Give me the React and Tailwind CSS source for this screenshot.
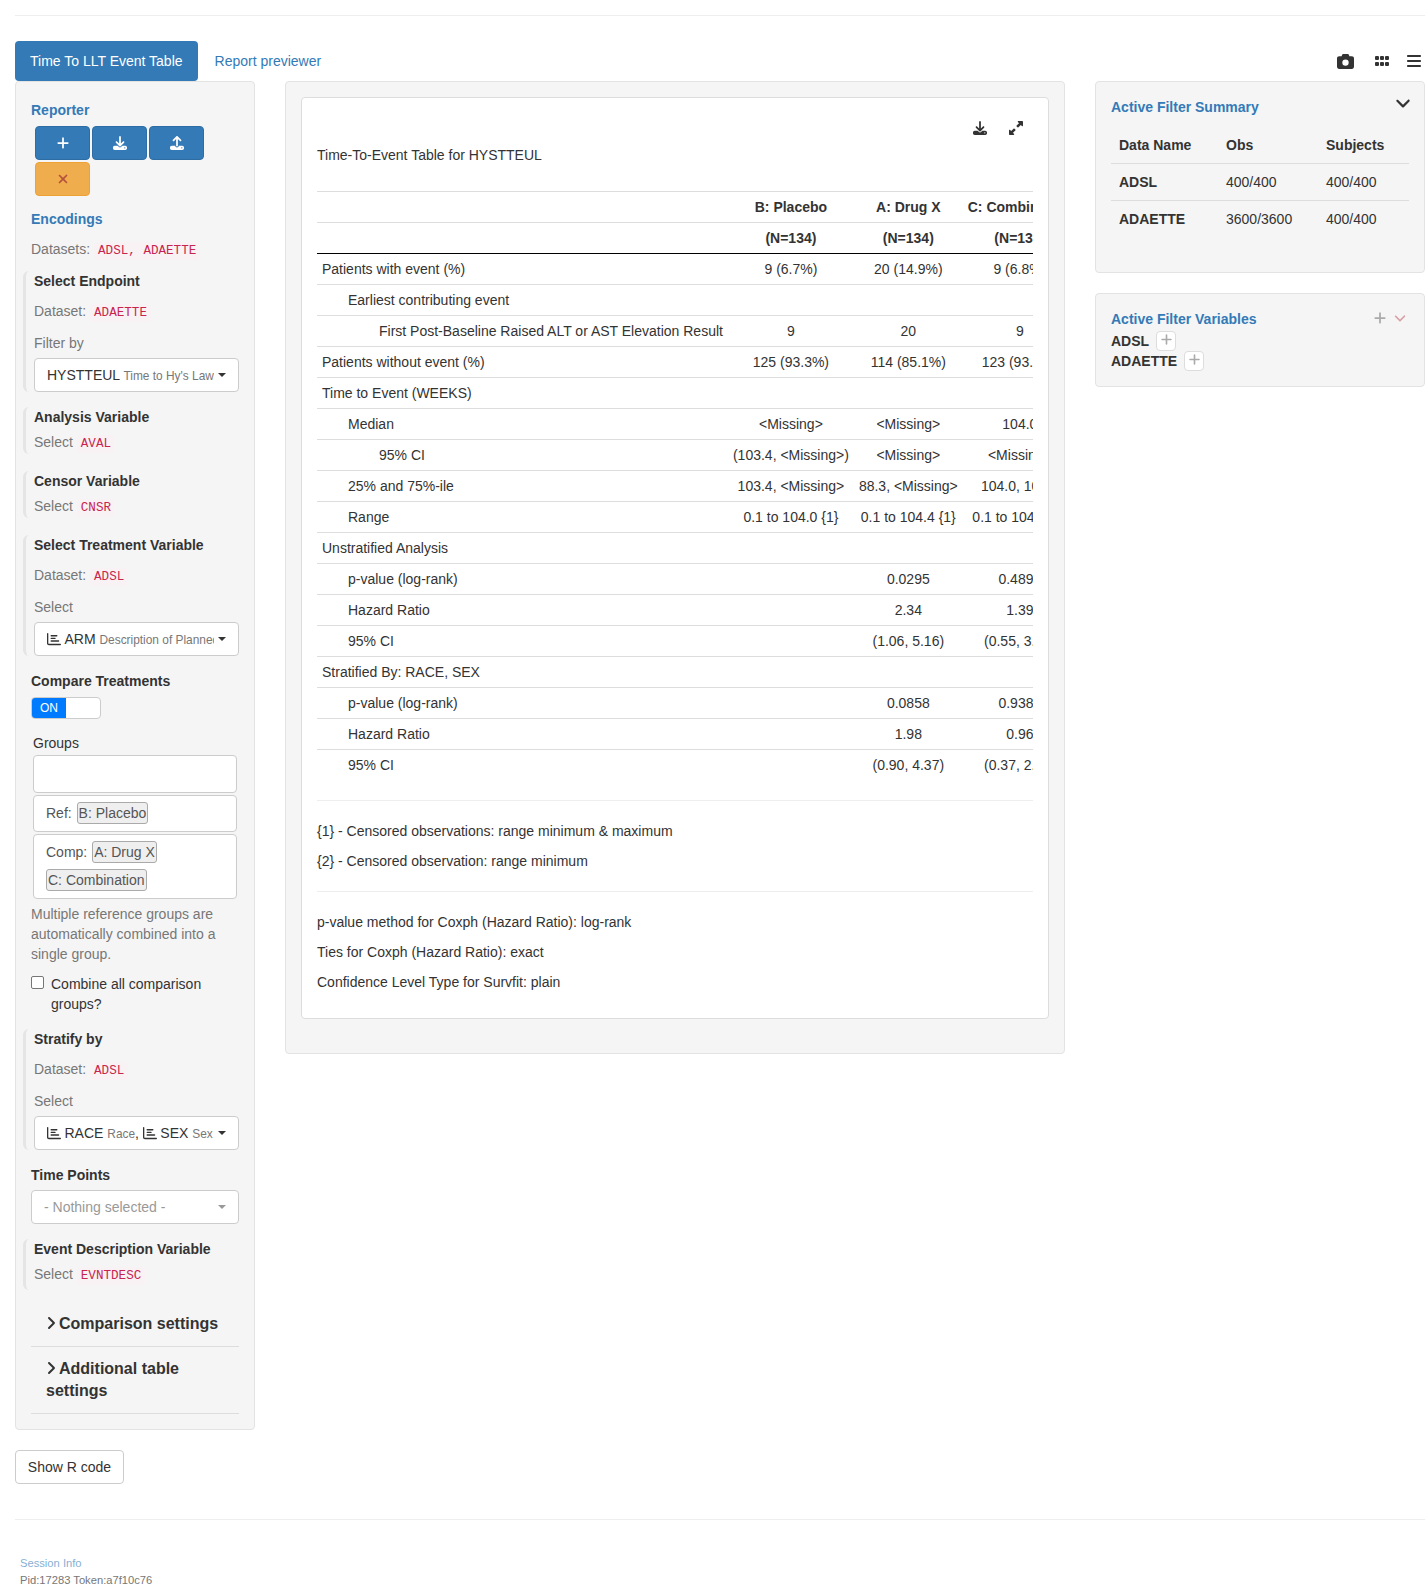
import React from 'react';
import { FaCamera, FaGrip, FaBars, FaPlus, FaXmark, FaDownload, FaUpload, FaUpRightAndDownLeftFromCenter, FaAngleDown, FaAngleRight, FaRegChartBar } from 'react-icons/fa6';

const Code = ({ children }) => (
    <code className="font-['Liberation_Mono',monospace] text-[12.6px] text-[#c7254e] bg-[#f9f2f4] px-1 py-0.5 rounded">{children}</code>
);

const Block = ({ className = '', children }) => (
    <div className={`border-l-[3px] border-[#e5e5e5] rounded-l-md pl-2 -ml-2 ${className}`}>{children}</div>
);

const Sel = ({ children, muted = false, className = '' }) => (
    <div className={`h-[34px] bg-white border border-[#ccc] rounded flex items-center pl-3 pr-3 ${muted ? 'text-[#999]' : 'text-[#333]'} ${className}`}>
        <div className="flex-1 overflow-hidden whitespace-nowrap">{children}</div>
        <span className="ml-1 w-0 h-0 border-x-4 border-x-transparent border-t-4 border-t-current shrink-0"></span>
    </div>
);

const Small = ({ children }) => <span className="text-[11.9px] text-[#777]">{children}</span>;
const Chart = () => <FaRegChartBar className="inline-block text-[14px] align-[-2px] mr-[3.5px]" />;
const Tag = ({ children, className = '' }) => <span className={`inline-block border border-[#aaa] bg-[#efefef] rounded-[3px] px-px text-[#555] leading-[20px] ${className}`}>{children}</span>;

const rows = [
    ['Patients with event (%)', 0, '9 (6.7%)', '20 (14.9%)', '9 (6.8%)'],
    ['Earliest contributing event', 1, '', '', ''],
    ['First Post-Baseline Raised ALT or AST Elevation Result', 2, '9', '20', '9'],
    ['Patients without event (%)', 0, '125 (93.3%)', '114 (85.1%)', '123 (93.2%)'],
    ['Time to Event (WEEKS)', 0, '', '', ''],
    ['Median', 1, '<Missing>', '<Missing>', '104.0'],
    ['95% CI', 2, '(103.4, <Missing>)', '<Missing>', '<Missing>'],
    ['25% and 75%-ile', 1, '103.4, <Missing>', '88.3, <Missing>', '104.0, 104.1'],
    ['Range', 1, '0.1 to 104.0 {1}', '0.1 to 104.4 {1}', '0.1 to 104.1 {1}'],
    ['Unstratified Analysis', 0, '', '', ''],
    ['p-value (log-rank)', 1, '', '0.0295', '0.4895'],
    ['Hazard Ratio', 1, '', '2.34', '1.39'],
    ['95% CI', 1, '', '(1.06, 5.16)', '(0.55, 3.50)'],
    ['Stratified By: RACE, SEX', 0, '', '', ''],
    ['p-value (log-rank)', 1, '', '0.0858', '0.9385'],
    ['Hazard Ratio', 1, '', '1.98', '0.96'],
    ['95% CI', 1, '', '(0.90, 4.37)', '(0.37, 2.50)'],
];

const indent = ['pl-[5px]', 'pl-[31px]', 'pl-[62px]'];

function LeftPanel() {
    return (
        <div className="w-[240px] shrink-0">
            <div className="bg-[#f5f5f5] border border-[#e3e3e3] rounded pt-[18px] px-[15px] pb-[15px] h-[1349px]">
                <div className="font-bold text-[#337ab7]">Reporter</div>
                <div className="mt-1.5 ml-1 flex flex-wrap gap-0.5 w-[180px]">
                    <div className="w-[55px] h-[34px] bg-[#337ab7] border border-[#2e6da4] rounded flex items-center justify-center text-white"><FaPlus className="text-[14px]" /></div>
                    <div className="w-[55px] h-[34px] bg-[#337ab7] border border-[#2e6da4] rounded flex items-center justify-center text-white"><FaDownload className="text-[14px]" /></div>
                    <div className="w-[55px] h-[34px] bg-[#337ab7] border border-[#2e6da4] rounded flex items-center justify-center text-white"><FaUpload className="text-[14px]" /></div>
                    <div className="w-[55px] h-[34px] bg-[#f0ad4e] border border-[#eea236] rounded flex items-center justify-center text-[#b5533c]"><FaXmark className="text-[14px]" /></div>
                </div>
                <div className="mt-[13px] font-bold text-[#337ab7]">Encodings</div>
                <div className="mt-2.5 text-[#777]">Datasets: <Code>ADSL, ADAETTE</Code></div>

                <Block className="mt-[10px]">
                    <div className="font-bold text-[#333]">Select Endpoint</div>
                    <div className="mt-2.5 text-[#777]">Dataset: <Code>ADAETTE</Code></div>
                    <div className="mt-[10px] text-[#777]">Filter by</div>
                    <Sel className="mt-[5px] w-[205px]">HYSTTEUL <Small>Time to Hy's Law</Small></Sel>
                </Block>

                <Block className="mt-[15px]">
                    <div className="font-bold text-[#333]">Analysis Variable</div>
                    <div className="mt-[5px] text-[#777]">Select <Code>AVAL</Code></div>
                </Block>

                <Block className="mt-[17px]">
                    <div className="font-bold text-[#333]">Censor Variable</div>
                    <div className="mt-[5px] text-[#777]">Select <Code>CNSR</Code></div>
                </Block>

                <Block className="mt-[17px]">
                    <div className="font-bold text-[#333]">Select Treatment Variable</div>
                    <div className="mt-2.5 text-[#777]">Dataset: <Code>ADSL</Code></div>
                    <div className="mt-[10px] text-[#777]">Select</div>
                    <Sel className="mt-[5px] w-[205px]"><Chart />ARM <Small>Description of Planned Arm</Small></Sel>
                </Block>

                <div className="mt-[15px] font-bold text-[#333]">Compare Treatments</div>
                <div className="mt-[6px] w-[70px] h-[22px] bg-white border border-[#ccc] rounded flex overflow-hidden text-[12px]">
                    <div className="w-[34px] bg-[#007bff] text-white flex items-center justify-center">ON</div>
                </div>

                <div className="mt-[14px] ml-0.5 text-[#333]">Groups</div>
                <div className="mt-[2px] ml-0.5 w-[204px] h-[38px] bg-white border border-[#ccc] rounded"></div>
                <div className="mt-0.5 ml-0.5 w-[204px] h-[37px] bg-white border border-[#ccc] rounded pl-3 pt-[6px] text-[#555]">Ref: <Tag className="ml-px">B: Placebo</Tag></div>
                <div className="mt-0.5 ml-0.5 w-[204px] h-[65px] bg-white border border-[#ccc] rounded pl-3 pt-[3px] text-[#555] leading-[28px]">Comp: <Tag className="ml-px">A: Drug X</Tag><br /><Tag>C: Combination</Tag></div>

                <div className="mt-[5px] text-[#777]">Multiple reference groups are automatically combined into a single group.</div>
                <div className="mt-[10px] flex text-[#333]">
                    <span className="-mt-[1px] w-[13px] h-[13px] border border-[#767676] rounded-[2px] bg-white shrink-0 translate-y-[3px]"></span>
                    <span className="ml-[7px]">Combine all comparison groups?</span>
                </div>

                <Block className="mt-[15px]">
                    <div className="font-bold text-[#333]">Stratify by</div>
                    <div className="mt-2.5 text-[#777]">Dataset: <Code>ADSL</Code></div>
                    <div className="mt-[10px] text-[#777]">Select</div>
                    <Sel className="mt-[5px] w-[205px]"><Chart />RACE <Small>Race</Small>, <Chart />SEX <Small>Sex</Small></Sel>
                </Block>

                <div className="mt-[15px] font-bold text-[#333]">Time Points</div>
                <Sel muted className="mt-[5px] w-[208px]">- Nothing selected -</Sel>

                <Block className="mt-[15px]">
                    <div className="font-bold text-[#333]">Event Description Variable</div>
                    <div className="mt-[5px] pb-1 text-[#777]">Select <Code>EVNTDESC</Code></div>
                </Block>

                <div className="mt-[23px] pl-[15px] pb-[11px] border-b border-[#ddd] text-[16px] font-bold text-[#333] leading-[22px]">
                    <FaAngleRight className="inline-block text-[16px] align-[-2px] -ml-[3px]" />Comparison settings
                </div>
                <div className="mt-[11px] pl-[15px] pb-[11px] border-b border-[#ddd] text-[16px] font-bold text-[#333] leading-[22px]">
                    <FaAngleRight className="inline-block text-[16px] align-[-2px] -ml-[3px]" />Additional table settings
                </div>
            </div>
            <div className="mt-[20px] w-[109px] h-[34px] bg-white border border-[#ccc] rounded flex items-center justify-center text-[#333]">Show R code</div>
        </div>
    );
}

function MainPanel() {
    return (
        <div className="w-[780px] shrink-0 ml-[30px]">
            <div className="bg-[#f5f5f5] border border-[#e3e3e3] rounded p-[15px] h-[973px]">
                <div className="bg-white border border-[#ddd] rounded h-[922px] px-[15px] pt-[20px]">
                    <div className="flex justify-end gap-[22px] pr-[10px] text-[#333] h-[20px] items-center">
                        <FaDownload className="text-[14px]" />
                        <FaUpRightAndDownLeftFromCenter className="text-[14px]" />
                    </div>
                    <div className="mt-[7px] text-[#333]">Time-To-Event Table for HYSTTEUL</div>
                    <div className="mt-[26px] overflow-hidden text-[#333]">
                        <table className="border-collapse w-max">
                            <thead>
                                <tr className="border-t border-[#ddd] h-[31px]">
                                    <th></th>
                                    <th className="px-[5px] font-bold text-center">B: Placebo</th>
                                    <th className="px-[5px] font-bold text-center">A: Drug X</th>
                                    <th className="px-[5px] font-bold text-center">C: Combination</th>
                                </tr>
                                <tr className="border-t border-[#ddd] border-b border-b-black h-[31px]">
                                    <th></th>
                                    <th className="px-[5px] font-bold text-center">(N=134)</th>
                                    <th className="px-[5px] font-bold text-center">(N=134)</th>
                                    <th className="px-[5px] font-bold text-center">(N=132)</th>
                                </tr>
                            </thead>
                            <tbody>
                                {rows.map((r, i) => (
                                    <tr key={i} className={`h-[31px] ${i > 0 ? 'border-t border-[#ddd]' : ''}`}>
                                        <td className={`${indent[r[1]]} pr-[5px]`}>{r[0]}</td>
                                        <td className="px-[5px] text-center">{r[2]}</td>
                                        <td className="px-[5px] text-center">{r[3]}</td>
                                        <td className="px-[5px] text-center">{r[4]}</td>
                                    </tr>
                                ))}
                            </tbody>
                        </table>
                    </div>
                    <div className="mt-[19px] border-t border-[#eee] pt-5 text-[#333]">
                        <div>{'{1} - Censored observations: range minimum & maximum'}</div>
                        <div className="mt-2.5">{'{2} - Censored observation: range minimum'}</div>
                    </div>
                    <div className="mt-5 border-t border-[#eee] pt-5 text-[#333]">
                        <div>p-value method for Coxph (Hazard Ratio): log-rank</div>
                        <div className="mt-2.5">Ties for Coxph (Hazard Ratio): exact</div>
                        <div className="mt-2.5">Confidence Level Type for Survfit: plain</div>
                    </div>
                </div>
            </div>
        </div>
    );
}

function RightPanel() {
    return (
        <div className="w-[330px] shrink-0 ml-[30px]">
            <div className="relative bg-[#f5f5f5] border border-[#e3e3e3] rounded h-[192px] pt-[15px] px-[15px]">
                <FaAngleDown className="absolute right-[12px] top-[12px] text-[18px] text-[#333]" />
                <div className="font-bold text-[#337ab7]">Active Filter Summary</div>
                <table className="mt-[9px] w-full text-[#333]">
                    <thead>
                        <tr className="h-[37px] border-b border-[#ddd] text-left">
                            <th className="pl-2 pt-0.5 w-[107px]">Data Name</th>
                            <th className="pl-2 pt-0.5 w-[100px]">Obs</th>
                            <th className="pl-2 pt-0.5">Subjects</th>
                        </tr>
                    </thead>
                    <tbody>
                        <tr className="h-[37px] border-b border-[#ddd]">
                            <td className="pl-2 font-bold">ADSL</td>
                            <td className="pl-2">400/400</td>
                            <td className="pl-2">400/400</td>
                        </tr>
                        <tr className="h-[37px]">
                            <td className="pl-2 font-bold">ADAETTE</td>
                            <td className="pl-2">3600/3600</td>
                            <td className="pl-2">400/400</td>
                        </tr>
                    </tbody>
                </table>
            </div>
            <div className="relative mt-5 bg-[#f5f5f5] border border-[#e3e3e3] rounded h-[94px] pt-[15px] px-[15px]">
                <div className="absolute right-[17px] top-[17px] flex items-center gap-[6px]">
                    <FaPlus className="text-[14px] text-[#aaa]" />
                    <FaAngleDown className="text-[14px] text-[#d9a0a8]" />
                </div>
                <div className="font-bold text-[#337ab7]">Active Filter Variables</div>
                <div className="flex items-center h-5 mt-[2px] font-bold text-[#333]">ADSL
                    <span className="ml-[7px] w-[20px] h-[20px] bg-white border border-[#ddd] rounded flex items-center justify-center text-[#aaa]"><FaPlus className="text-[13px] -mt-1" /></span>
                </div>
                <div className="flex items-center h-5 font-bold text-[#333]">ADAETTE
                    <span className="ml-[7px] w-[20px] h-[20px] bg-white border border-[#ddd] rounded flex items-center justify-center text-[#aaa]"><FaPlus className="text-[13px] -mt-1" /></span>
                </div>
            </div>
        </div>
    );
}

export default function App() {
    return (
        <div className="font-['Liberation_Sans',Arial,sans-serif] text-[14px] leading-5 text-[#333] bg-white pl-[15px] h-[1591px] overflow-hidden">
            <div className="h-[16px] border-b border-[#eee]"></div>
            <div className="mt-[25px] h-10 flex items-center">
                <div className="h-10 px-[15px] flex items-center bg-[#337ab7] text-white rounded">Time To LLT Event Table</div>
                <div className="ml-[2px] px-[15px] text-[#337ab7]">Report previewer</div>
                <div className="ml-auto flex items-center text-[#333]">
                    <FaCamera className="text-[17px]" />
                    <FaGrip className="ml-[20px] text-[16px]" />
                    <FaBars className="ml-[16px] mr-[3px] text-[16px]" />
                </div>
            </div>
            <div className="flex items-start">
                <LeftPanel />
                <MainPanel />
                <RightPanel />
            </div>
            <div className="mt-[35px] border-t border-[#eee]"></div>
            <div className="mt-[35px] pl-[5px] text-[11.2px] leading-[17px] text-[#777]">
                <div className="text-[#337ab7] opacity-60">Session Info</div>
                <div>Pid:17283 Token:a7f10c76</div>
            </div>
        </div>
    );
}
